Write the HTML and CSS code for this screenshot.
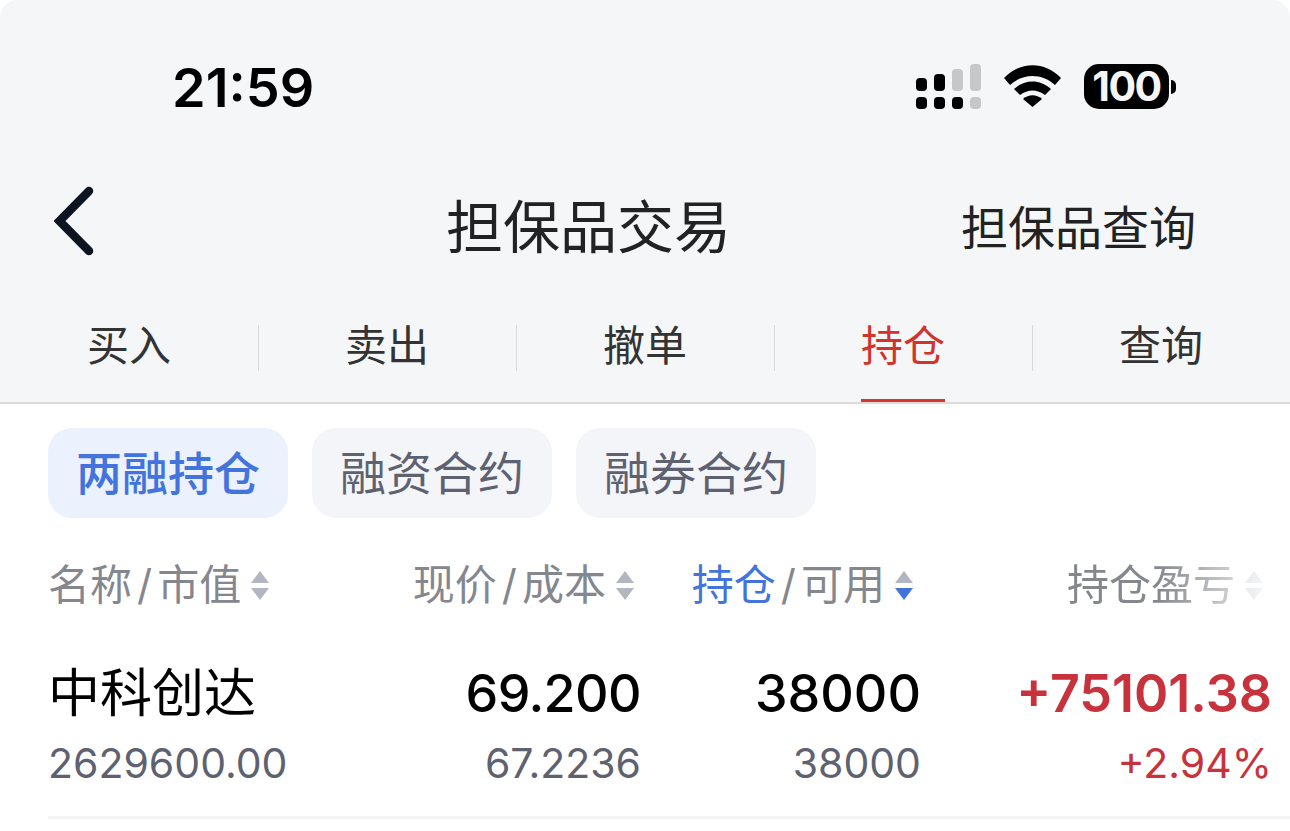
FILE: index.html
```html
<!DOCTYPE html>
<html lang="zh-CN">
<head>
    <meta charset="UTF-8">
    <meta name="viewport" content="width=device-width, initial-scale=1.0">
    <title>担保品交易</title>
    <link rel="stylesheet" href="styles.css">
</head>
<body>
<div class="page">
    <header class="top">
        <!-- status bar -->
        <div class="status">
            <span class="time">21:59</span>
            <div class="status-icons">
                <svg class="signal" width="65" height="45" viewBox="0 0 65 45">
                    <rect x="0" y="14" width="11" height="13" rx="4" fill="#000"/>
                    <rect x="18" y="10" width="11" height="17" rx="4" fill="#000"/>
                    <rect x="36" y="5" width="11" height="22" rx="4" fill="#c6c7c9"/>
                    <rect x="54" y="0" width="11" height="27" rx="4" fill="#c6c7c9"/>
                    <rect x="0" y="33" width="11" height="12" rx="4" fill="#000"/>
                    <rect x="18" y="33" width="11" height="12" rx="4" fill="#000"/>
                    <rect x="36" y="33" width="11" height="12" rx="4" fill="#000"/>
                    <rect x="54" y="33" width="11" height="12" rx="4" fill="#c6c7c9"/>
                </svg>
                <svg class="wifi" width="57" height="42" viewBox="0 0 57 42">
                    <path d="M0 13 C16 -4 41 -4 57 13 L51 20 C38 8 19 8 6 20 Z" fill="#000"/>
                    <path d="M10 24 C21 14 36 14 47 24 L41 30 C33 24 24 24 16 30 Z" fill="#000"/>
                    <path d="M19 34 C25 29 32 29 38 34 L28.5 42 Z" fill="#000"/>
                </svg>
                <div class="battery">
                    <span class="battery-body">100</span>
                    <span class="battery-cap"></span>
                </div>
            </div>
        </div>

        <!-- nav bar -->
        <div class="nav">
            <svg class="back" width="40" height="70" viewBox="0 0 40 70">
                <path d="M35 5 L5.5 35 L35 65" fill="none" stroke="#0b1420" stroke-width="8.5" stroke-linecap="round"/>
            </svg>
            <h1 class="nav-title">担保品交易</h1>
            <span class="nav-link">担保品查询</span>
        </div>

        <!-- main tabs -->
        <nav class="tabs">
            <div class="tab"><span>买入</span></div>
            <div class="tab"><span>卖出</span></div>
            <div class="tab"><span>撤单</span></div>
            <div class="tab active"><span>持仓</span></div>
            <div class="tab"><span>查询</span></div>
        </nav>
    </header>

    <div class="chips">
        <span class="chip active">两融持仓</span>
        <span class="chip">融资合约</span>
        <span class="chip">融券合约</span>
    </div>

    <div class="table-head">
        <div class="col col-name">名称<b class="slash">/</b>市值<i class="sort"></i></div>
        <div class="col col-price">现价<b class="slash">/</b>成本<i class="sort"></i></div>
        <div class="col col-hold"><em>持仓</em><b class="slash">/</b>可用<i class="sort down"></i></div>
        <div class="col col-profit fade">持仓盈亏<i class="sort"></i></div>
    </div>

    <div class="row">
        <div class="col col-name">
            <div class="main name">中科创达</div>
            <div class="sub">2629600.00</div>
        </div>
        <div class="col col-price">
            <div class="main tight">69.200</div>
            <div class="sub">67.2236</div>
        </div>
        <div class="col col-hold">
            <div class="main">38000</div>
            <div class="sub">38000</div>
        </div>
        <div class="col col-profit">
            <div class="main up">+75101.38</div>
            <div class="sub up">+2.94%</div>
        </div>
    </div>
</div>
</body>
</html>
```

FILE: styles.css
```css
* {
    box-sizing: border-box;
}
html, body {
    margin: 0;
    padding: 0;
    background: #fff;
}
body {
    font-family: Inter, "Noto Sans CJK SC", sans-serif;
    color: #000;
}
.page {
    width: 1290px;
    height: 831px;
    overflow: hidden;
}
.top {
    background: #f5f6f8;
    border-radius: 18px 18px 0 0;
    border-bottom: 2px solid #dcdcdc;
    height: 404px;
}
.status {
    height: 175px;
    display: flex;
    justify-content: space-between;
    padding: 56px 114px 0 172px;
}
.time {
    font-size: 54px;
    font-weight: 600;
    line-height: 63px;
}
.status-icons {
    display: flex;
    align-items: flex-start;
    padding-top: 8px;
}
.signal {
    margin-right: 23px;
}
.wifi {
    margin: 1px 23px 0 0;
}
.battery {
    display: flex;
    align-items: center;
    height: 45px;
}
.battery-body {
    width: 85px;
    height: 45px;
    background: #000;
    color: #f5f6f8;
    border-radius: 15px;
    font-size: 41px;
    font-weight: 700;
    line-height: 45px;
    text-align: center;
    letter-spacing: -1.5px;
}
.battery-cap {
    width: 5px;
    height: 14px;
    margin-left: 2px;
    background: #000;
    border-radius: 0 7px 7px 0;
}
.nav {
    height: 110px;
    display: flex;
    align-items: center;
    padding: 0 94px 4px 54px;
}
.back {
    margin-bottom: 14px;
}
.nav-title {
    margin: 0 0 0 352px;
    font-size: 57px;
    font-weight: 400;
    line-height: 66px;
    color: #222;
}
.nav-link {
    margin-left: auto;
    font-size: 47px;
    line-height: 66px;
    color: #222;
}
.tabs {
    display: flex;
    height: 117px;
}
.tab {
    flex: 0 0 258px;
    display: flex;
    justify-content: center;
    position: relative;
    font-size: 42px;
    color: #333;
}
.tab span {
    display: block;
    height: 117px;
    padding-top: 31px;
    line-height: 60px;
}
.tab + .tab::before {
    content: "";
    position: absolute;
    left: 0;
    top: 40px;
    height: 46px;
    width: 1px;
    background: #d9dadc;
}
.tab.active {
    color: #d0342c;
}
.tab.active span {
    border-bottom: 3px solid #d9352e;
}
.chips {
    display: flex;
    gap: 24px;
    padding: 24px 0 0 48px;
}
.chip {
    width: 240px;
    height: 90px;
    border-radius: 24px;
    background: #f4f5f9;
    color: #5e6270;
    font-size: 46px;
    line-height: 90px;
    text-align: center;
}
.chip.active {
    background: #ebf1fd;
    color: #4373dc;
    font-weight: 500;
}
.table-head,
.row {
    display: flex;
    padding-left: 48px;
}
.table-head {
    margin-top: 37px;
    font-size: 42px;
    line-height: 60px;
    color: #85878f;
}
.table-head .col {
    display: flex;
    align-items: center;
}
.slash {
    font-weight: 400;
    margin: 0 5px;
}
.col-name {
    width: 320px;
}
.col-price {
    width: 273px;
    text-align: right;
}
.col-hold {
    width: 280px;
    text-align: right;
}
.col-profit {
    width: 351px;
    text-align: right;
}
.table-head .col {
    justify-content: flex-end;
}
.table-head .col-name {
    justify-content: flex-start;
}
.table-head .col-price {
    width: 266px;
}
.table-head .col-hold {
    width: 279px;
}
.table-head .col-profit {
    width: 350px;
}
.table-head em {
    font-style: normal;
    color: #4373dc;
}
.fade {
    -webkit-mask-image: linear-gradient(to right, #000 70%, rgba(0, 0, 0, 0.15) 100%);
    mask-image: linear-gradient(to right, #000 70%, rgba(0, 0, 0, 0.15) 100%);
}
.sort {
    display: inline-block;
    width: 18px;
    height: 29px;
    margin-left: 10px;
    position: relative;
}
.sort::before,
.sort::after {
    content: "";
    position: absolute;
    left: 0;
    border-left: 9px solid transparent;
    border-right: 9px solid transparent;
}
.sort::before {
    top: 0;
    border-bottom: 12px solid #b2b6c0;
}
.sort::after {
    bottom: 0;
    border-top: 12px solid #b2b6c0;
}
.sort.down::after {
    border-top-color: #4373dc;
}
.row {
    margin-top: 47px;
    height: 157px;
    position: relative;
}
.row::after {
    content: "";
    position: absolute;
    left: 48px;
    right: 0;
    bottom: 0;
    height: 3px;
    background: #f3f4f6;
}
.main {
    font-size: 52px;
    line-height: 64px;
    font-weight: 500;
}
.main.name {
    font-weight: 400;
}
.main.tight {
    letter-spacing: -0.6px;
}
.main.up {
    font-weight: 600;
}
.sub {
    font-size: 41px;
    line-height: 50px;
    margin-top: 12px;
    color: #5e6270;
}
.up {
    color: #c8323c;
}
```
